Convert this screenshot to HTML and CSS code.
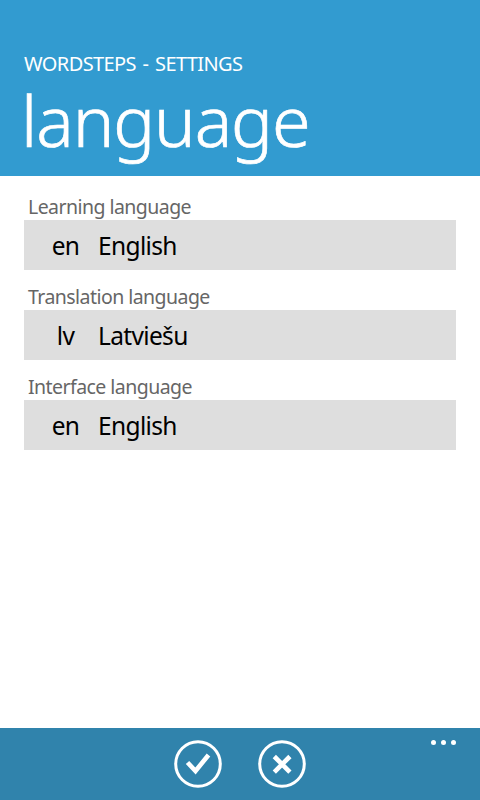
FILE: index.html
```html
<!DOCTYPE html>
<html lang="en">
<head>
<meta charset="utf-8">
<title>WordSteps settings</title>
<link rel="stylesheet" href="styles.css">
</head>
<body>
<header class="header">
  <div class="app-title">WORDSTEPS - SETTINGS</div>
  <h1 class="page-title">language</h1>
</header>
<main class="content">
  <section class="field">
    <div class="label">Learning language</div>
    <div class="picker"><span class="code">en</span><span class="name">English</span></div>
  </section>
  <section class="field">
    <div class="label">Translation language</div>
    <div class="picker"><span class="code">lv</span><span class="name">Latviešu</span></div>
  </section>
  <section class="field">
    <div class="label">Interface language</div>
    <div class="picker"><span class="code">en</span><span class="name">English</span></div>
  </section>
</main>
<footer class="appbar">
  <svg class="icon" viewBox="0 0 48 48"><circle cx="24" cy="24" r="22.3"/><path class="check" d="M13.5 22.5l8 8.5L34.5 15"/></svg>
  <svg class="icon" viewBox="0 0 48 48"><circle cx="24" cy="24" r="22.3"/><path class="cross" d="M16.3 16.5l15.6 15.6M31.9 16.5l-15.6 15.6"/></svg>
  <div class="more"><i></i><i></i><i></i></div>
</footer>
</body>
</html>
```

FILE: styles.css
```css
* { box-sizing: border-box; }
body {
  margin: 0;
  width: 480px;
  height: 800px;
  display: flex;
  flex-direction: column;
  background: #fff;
  font-family: "Noto Sans", "Open Sans", sans-serif;
  overflow: hidden;
}
.header { height: 176px; padding: 50px 22px 0 18px; background: #329bd0; color: #fff; }
.app-title { padding-left: 6px; font-size: 20px; line-height: 28px; white-space: nowrap; letter-spacing: -0.6px; word-spacing: 2px; }
.page-title { margin: 0 0 0 3px; font-size: 70px; line-height: 85px; font-weight: 300; letter-spacing: -1.1px; -webkit-text-stroke: 0.7px #fff; }
.content { flex: 1; padding: 18px 24px 0; }
.field { height: 90px; }
.label { height: 26px; padding-left: 4px; font-size: 19.5px; line-height: 26px; color: #666; white-space: nowrap; letter-spacing: -0.55px; }
.picker { height: 50px; display: flex; align-items: center; background: #dedede; color: #000; font-size: 24.5px; line-height: 50px; padding-top: 2px; letter-spacing: -0.65px; }
.code { width: 27px; margin-left: 28px; display: flex; justify-content: center; }
.name { margin-left: 19px; }
.appbar { position: relative; height: 72px; padding-top: 12px; display: flex; justify-content: center; gap: 36px; background: #3083ac; }
.icon { width: 48px; height: 48px; fill: none; stroke: #fff; stroke-width: 3; }
.check, .cross { stroke-width: 4.6; }
.more { position: absolute; right: 24px; top: 12px; display: flex; gap: 5px; }
.more i { width: 5px; height: 5px; border-radius: 50%; background: #fff; }
```
